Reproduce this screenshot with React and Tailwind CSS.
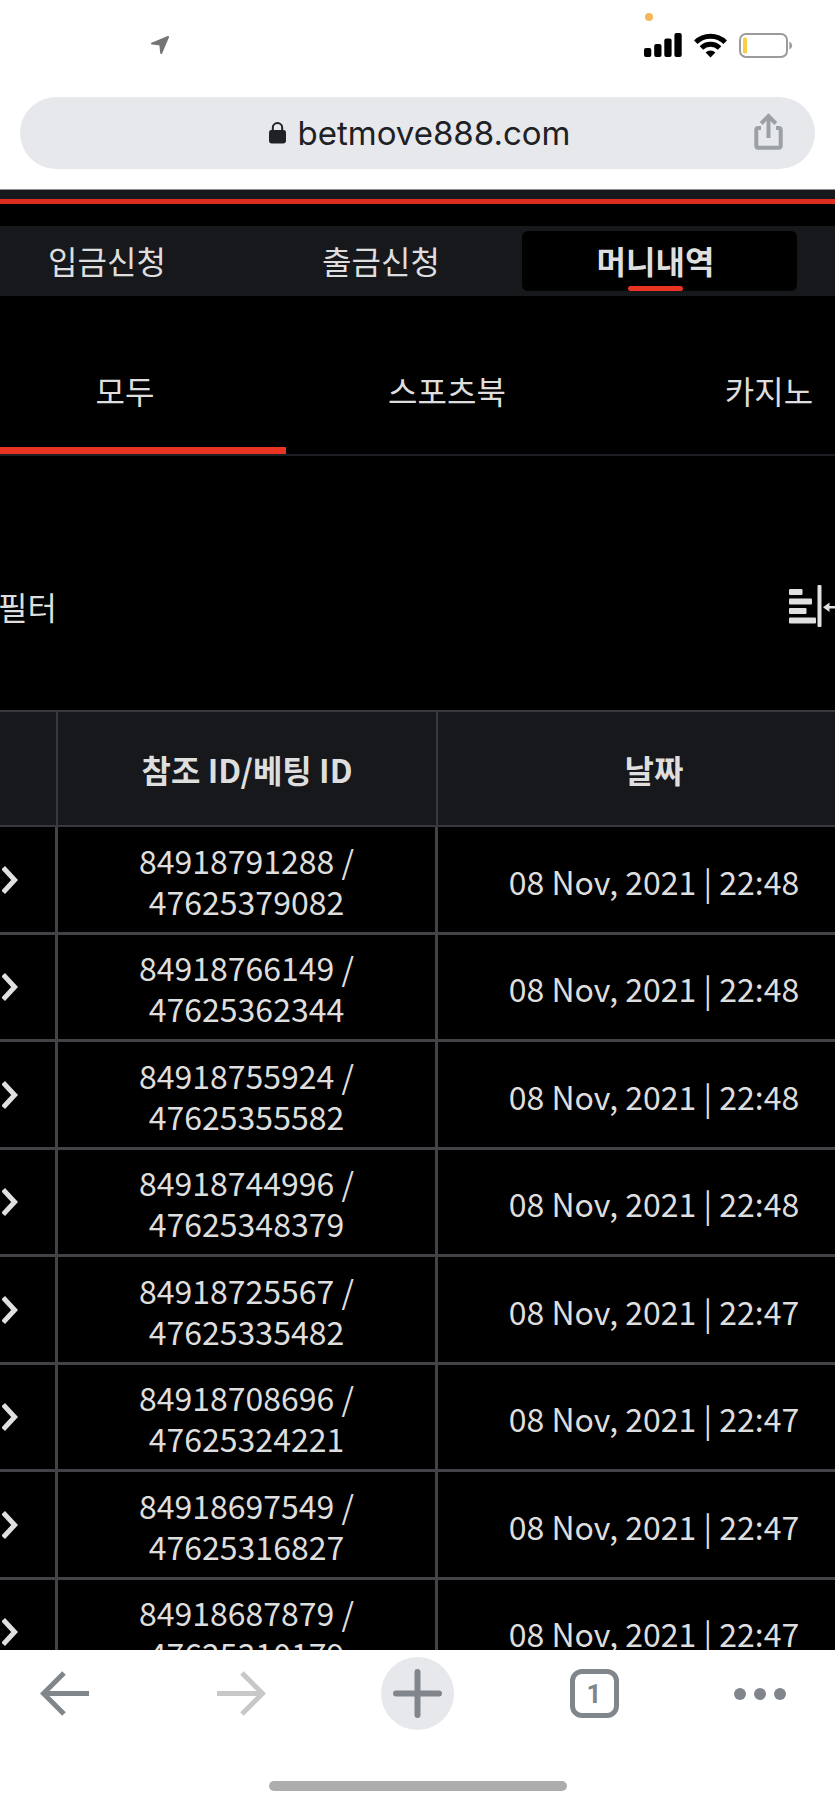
const navItems = ["입금신청", "출금신청", "머니내역"];
const tabs = ["모두", "스포츠북", "카지노"];

const bets = [
  { refId: "84918791288", betId: "47625379082", date: "08 Nov, 2021 | 22:48" },
  { refId: "84918766149", betId: "47625362344", date: "08 Nov, 2021 | 22:48" },
  { refId: "84918755924", betId: "47625355582", date: "08 Nov, 2021 | 22:48" },
  { refId: "84918744996", betId: "47625348379", date: "08 Nov, 2021 | 22:48" },
  { refId: "84918725567", betId: "47625335482", date: "08 Nov, 2021 | 22:47" },
  { refId: "84918708696", betId: "47625324221", date: "08 Nov, 2021 | 22:47" },
  { refId: "84918697549", betId: "47625316827", date: "08 Nov, 2021 | 22:47" },
  { refId: "84918687879", betId: "47625310179", date: "08 Nov, 2021 | 22:47" },
];

function StatusBar() {
  return (
    <div className="relative flex h-[97px] shrink-0 items-center justify-between pb-[7px] pl-[151px] pr-[42px]">
      <svg width="18" height="18" viewBox="0 0 18 18" fill="#757575" stroke="#757575" strokeWidth="2" strokeLinejoin="round">
        <path d="M17 1 L1 7.6 L9.3 8.6 L10.2 17 Z" />
      </svg>

      {/* Microphone in use */}
      <span className="absolute right-[182px] top-[13px] size-2 rounded-full bg-[#f5b759]" />

      <div className="flex items-center">
        <svg width="38" height="24" viewBox="0 0 38 24" fill="#000">
          <rect x="0" y="15" width="7.3" height="9" rx="2" />
          <rect x="10.2" y="11" width="7.3" height="13" rx="2" />
          <rect x="20.3" y="5.6" width="7.3" height="18.4" rx="2" />
          <rect x="30.4" y="0" width="7.3" height="24" rx="2" />
        </svg>
        <svg className="ml-3" width="33" height="25" viewBox="0 0 33 25" fill="none" stroke="#000" strokeWidth="5">
          <path d="M1.8 9.3 A21 21 0 0 1 31.2 9.3" />
          <path d="M7.4 15 A13 13 0 0 1 25.6 15" />
          <path d="M16.5 24.4 L11.6 19.4 A7 7 0 0 1 21.4 19.4 Z" fill="#000" stroke="none" />
        </svg>
        <svg className="ml-3" width="54" height="25" viewBox="0 0 54 25">
          <rect x="1" y="1" width="47" height="23" rx="6" fill="none" stroke="#9b9b9b" strokeWidth="2" />
          <rect x="4" y="4.5" width="4" height="16" rx="1.6" fill="#f7ce45" />
          <path d="M50.3 8.5 Q53.2 9.8 53.2 12.5 Q53.2 15.2 50.3 16.5 Z" fill="#9b9b9b" />
        </svg>
      </div>
    </div>
  );
}

function AddressBar() {
  return (
    <div className="mx-5 mb-5 grid h-[72px] shrink-0 grid-cols-[1fr_auto_1fr] items-center rounded-full bg-[#e7e8ec] px-8">
      <button className="col-start-2 flex items-center gap-3 pl-1 font-['Inter','Liberation_Sans',sans-serif] text-[33px] leading-10 text-[#202124]">
        <svg width="17" height="22" viewBox="0 0 17 22">
          <rect x="0" y="8" width="17" height="13.5" rx="2.4" fill="#202124" />
          <path d="M3.8 9 V5.8 A4.7 4.7 0 0 1 13.2 5.8 V9" fill="none" stroke="#202124" strokeWidth="2" />
        </svg>
        betmove888.com
      </button>
      <button aria-label="Share" className="justify-self-end pb-1">
        <svg width="29" height="37" viewBox="0 0 29 37" fill="none" stroke="#9aa0a6" strokeWidth="4">
          <path d="M7 15 H4.5 Q2.3 15 2.3 17 V32.5 Q2.3 34.7 4.5 34.7 H24.5 Q26.7 34.7 26.7 32.5 V17 Q26.7 15 24.5 15 H22" />
          <path d="M14.5 25 V4" />
          <path d="M7.2 10.5 L14.5 3.2 L21.8 10.5" />
        </svg>
      </button>
    </div>
  );
}

function Nav() {
  return (
    <nav className="mt-[22px] overflow-hidden bg-[#17181c] py-[5px]">
      <div className="-ml-[26px] flex">
        {navItems.map((item) => {
          const active = item === "머니내역";
          return (
            <a
              key={item}
              href="#"
              className={
                active
                  ? "flex h-[60px] w-[275px] shrink-0 flex-col items-center justify-between rounded-md bg-black pr-2 pt-1 font-bold"
                  : "flex h-[60px] w-[274px] shrink-0 flex-col items-center pr-2 pt-1"
              }
            >
              <span className="leading-[51px]">{item}</span>
              {active && <span className="h-[5px] w-[55px] rounded-full bg-[#e93323]" />}
            </a>
          );
        })}
      </div>
    </nav>
  );
}

function Tabs() {
  return (
    <div className="overflow-hidden border-b-2 border-[#1c1d23] pt-[30px]">
      <div className="-ml-[36px] flex" role="tablist">
        {tabs.map((tab, i) => (
          <button
            key={tab}
            role="tab"
            aria-selected={i === 0}
            className={
              i === 0
                ? "h-32 w-[322px] shrink-0 border-b-7 border-[#e93323] pt-1.5"
                : "h-32 w-[322px] shrink-0 border-b-7 border-transparent pt-1.5"
            }
          >
            {tab}
          </button>
        ))}
      </div>
    </div>
  );
}

function Filter() {
  return (
    <div className="flex h-[254px] items-center justify-between overflow-hidden pt-[46px]">
      <button className="-ml-0.5">필터</button>
      <button aria-label="Columns" className="-mr-2 shrink-0">
        <svg width="54" height="42" viewBox="0 0 54 42" fill="#e0e0e0">
          <rect x="0" y="4" width="13.5" height="6" rx="1" />
          <rect x="0" y="13.4" width="23" height="6" rx="1" />
          <rect x="0" y="23" width="17.5" height="6" rx="1" />
          <rect x="0" y="32.4" width="27" height="6" rx="1" />
          <rect x="28.5" y="0" width="4" height="42" rx="1" />
          <path d="M34 22.2 L40.5 17.4 V21 H54 V23.4 H40.5 V27 Z" />
        </svg>
      </button>
    </div>
  );
}

function BetTable() {
  return (
    <table className="w-[calc(100%+35px)] table-fixed border-separate border-spacing-0 text-center">
      <thead>
        <tr className="h-[117px] bg-[#17181c]">
          <th className="w-[58px] border-y-2 border-r-2 border-[#38393d]" />
          <th className="w-[380px] border-y-2 border-r-2 border-[#38393d]">참조 ID/베팅 ID</th>
          <th className="border-y-2 border-[#38393d]">날짜</th>
        </tr>
      </thead>
      <tbody>
        {bets.map((bet) => (
          <tr key={bet.refId} className="odd:h-[108px] even:h-[107px]">
            <td className="border-b-3 border-r-3 border-[#434347] p-0">
              <button aria-label="Open" className="block pl-0.5">
                <svg width="16" height="28" viewBox="0 0 16 28" fill="none" stroke="#e0e0e0" strokeWidth="5">
                  <path d="M1.2 1.7 L12.6 14 L1.2 26.3" />
                </svg>
              </button>
            </td>
            <td className="border-b-3 border-r-3 border-[#434347] p-0 pt-0.5 leading-[41px]">
              {bet.refId} /<br />
              {bet.betId}
            </td>
            <td className="border-b-3 border-[#434347] p-0 pt-0.5">{bet.date}</td>
          </tr>
        ))}
      </tbody>
    </table>
  );
}

function Toolbar() {
  return (
    <div className="shrink-0 bg-white pb-4 pt-[7px]">
      <div className="flex items-center justify-between px-7">
        <button aria-label="Back" className="flex size-[73px] items-center justify-center">
          <svg width="49" height="45" viewBox="0 0 49 45" fill="none" stroke="#80868b" strokeWidth="5">
            <path d="M49 22.5 H5" />
            <path d="M24 2 L3.5 22.5 L24 43" />
          </svg>
        </button>
        <button aria-label="Forward" disabled className="flex size-[73px] items-center justify-center">
          <svg width="49" height="45" viewBox="0 0 49 45" fill="none" stroke="#c8c8c8" strokeWidth="5">
            <path d="M0 22.5 H44" />
            <path d="M25 2 L45.5 22.5 L25 43" />
          </svg>
        </button>
        <button aria-label="New tab" className="flex size-[73px] items-center justify-center rounded-full bg-[#e7e8ec]">
          <svg width="49" height="49" viewBox="0 0 49 49" fill="none" stroke="#80868b" strokeWidth="6" strokeLinecap="round">
            <path d="M3 24.5 H46 M24.5 3 V46" />
          </svg>
        </button>
        <button aria-label="Tabs" className="flex size-[73px] items-center justify-center">
          <span className="flex size-[49px] items-center justify-center rounded-xl border-5 border-[#80868b] font-['Roboto','Liberation_Sans',sans-serif] text-[26px] font-bold leading-none text-[#80868b]">
            1
          </span>
        </button>
        <button aria-label="More" className="flex w-[73px] gap-2">
          <span className="size-3 rounded-full bg-[#80868b]" />
          <span className="size-3 rounded-full bg-[#80868b]" />
          <span className="size-3 rounded-full bg-[#80868b]" />
        </button>
      </div>
      <div className="mx-auto mt-[51px] h-[10px] w-[298px] rounded-full bg-[#adadad]" />
    </div>
  );
}

export default function App() {
  return (
    <div className="flex h-screen flex-col overflow-hidden bg-white">
      <StatusBar />
      <AddressBar />
      <main className="min-h-0 flex-1 overflow-hidden border-t border-[#8e8e8e] bg-black font-['Noto_Sans_CJK_KR',sans-serif] text-[32px] leading-[48px] text-[#dedede]">
        <div className="h-[14px] border-b-5 border-[#dd2e20] bg-[#17181c]" />
        <Nav />
        <Tabs />
        <Filter />
        <BetTable />
      </main>
      <Toolbar />
    </div>
  );
}
